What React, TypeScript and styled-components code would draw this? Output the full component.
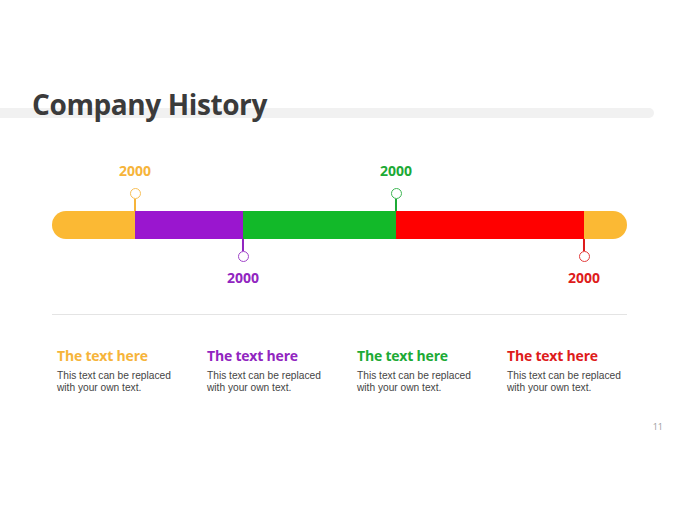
import React from 'react'
import styled, { createGlobalStyle } from 'styled-components'

const GlobalStyle = createGlobalStyle`
  html, body {
    margin: 0;
    padding: 0;
    background: #ffffff;
  }
  body {
    font-family: 'Open Sans', 'Noto Sans', sans-serif;
  }
`

type Milestone = {
  width: number
  color: string
  text: string
  label?: string
  side?: 'up' | 'down'
  rounded?: 'left' | 'right'
}

const segments: Milestone[] = [
  { width: 83, color: '#fbb934', text: '#f6b43a', label: '2000', side: 'up', rounded: 'left' },
  { width: 108, color: '#9a16cf', text: '#9125c0', label: '2000', side: 'down' },
  { width: 153, color: '#12b929', text: '#1caa35', label: '2000', side: 'up' },
  { width: 188, color: '#ff0000', text: '#de1b1b', label: '2000', side: 'down' },
  { width: 43, color: '#fbb934', text: '#f6b43a', rounded: 'right' },
]

const columns = [
  { color: '#f6b43a', title: 'The text here' },
  { color: '#9125c0', title: 'The text here' },
  { color: '#1caa35', title: 'The text here' },
  { color: '#de1b1b', title: 'The text here' },
]

const Slide = styled.div`
  width: 680px;
  height: 510px;
  overflow: hidden;
  display: flex;
  flex-direction: column;
`

const Header = styled.header`
  display: grid;
  height: 40px;
  margin-top: 84px;
`

const Band = styled.div`
  grid-area: 1 / 1;
  align-self: end;
  width: 654px;
  height: 10px;
  margin-bottom: 6px;
  background: #f1f1f1;
  border-radius: 0 5px 5px 0;
`

const Title = styled.h1`
  grid-area: 1 / 1;
  position: relative;
  margin: 0 0 0 32px;
  font-size: 28px;
  line-height: 40px;
  font-weight: 700;
  letter-spacing: -0.4px;
  color: #3b3b3b;
`

const Content = styled.main`
  margin-left: 52px;
  width: 575px;
  display: flex;
  flex-direction: column;
`

const Bar = styled.div`
  display: flex;
  height: 28px;
  margin-top: 87px;
`

const Segment = styled.div<{ $w: number; $c: string; $round?: 'left' | 'right' }>`
  position: relative;
  width: ${(p) => p.$w}px;
  flex: none;
  background: ${(p) => p.$c};
  border-radius: ${(p) =>
    p.$round === 'left' ? '14px 0 0 14px' : p.$round === 'right' ? '0 14px 14px 0' : '0'};
`

const Marker = styled.div<{ $side: 'up' | 'down' }>`
  position: absolute;
  left: 100%;
  transform: translateX(-50%);
  display: flex;
  flex-direction: ${(p) => (p.$side === 'up' ? 'column' : 'column-reverse')};
  align-items: center;
  ${(p) => (p.$side === 'up' ? 'bottom: 100%;' : 'top: 100%;')}
`

const Year = styled.span<{ $c: string }>`
  font-size: 14px;
  line-height: 16px;
  font-weight: 700;
  color: ${(p) => p.$c};
  margin: 0 0 9px;
`

const YearDown = styled(Year)`
  margin: 8px 0 0;
`

const Dot = styled.span<{ $c: string }>`
  box-sizing: border-box;
  width: 11px;
  height: 11px;
  border-radius: 50%;
  border: 1px solid ${(p) => p.$c};
  background: #ffffff;
  opacity: 0.85;
`

const Stem = styled.span<{ $c: string }>`
  width: 2px;
  height: 12px;
  background: ${(p) => p.$c};
`

const Divider = styled.hr`
  margin: 75px 0 0;
  border: 0;
  height: 1px;
  background: #e4e4e4;
`

const Columns = styled.section`
  display: grid;
  grid-template-columns: repeat(4, 150px);
  padding-left: 5px;
  margin-top: 32px;
`

const Column = styled.div`
  display: flex;
  flex-direction: column;
`

const Heading = styled.h2<{ $c: string }>`
  margin: 0;
  font-size: 14px;
  line-height: 18px;
  font-weight: 700;
  letter-spacing: -0.2px;
  color: ${(p) => p.$c};
`

const Body = styled.p`
  margin: 5px 0 0;
  font-family: 'Liberation Sans', Arial, sans-serif;
  font-size: 10.2px;
  line-height: 12px;
  color: #444444;
`

const Footer = styled.footer`
  display: flex;
  justify-content: flex-end;
  padding-right: 17px;
  margin-top: 27px;
  font-size: 9px;
  line-height: 12px;
  color: #9c9c9c;
`

const App: React.FC = () => {
  return (
    <Slide>
      <GlobalStyle />
      <Header>
        <Band />
        <Title>Company History</Title>
      </Header>
      <Content>
        <Bar>
          {segments.map((s, i) => (
            <Segment key={i} $w={s.width} $c={s.color} $round={s.rounded}>
              {s.label && s.side && (
                <Marker $side={s.side}>
                  {s.side === 'up' ? (
                    <Year $c={s.text}>{s.label}</Year>
                  ) : (
                    <YearDown $c={s.text}>{s.label}</YearDown>
                  )}
                  <Dot $c={s.text} />
                  <Stem $c={s.text} />
                </Marker>
              )}
            </Segment>
          ))}
        </Bar>
        <Divider />
        <Columns>
          {columns.map((c, i) => (
            <Column key={i}>
              <Heading $c={c.color}>{c.title}</Heading>
              <Body>
                This text can be replaced
                <br />
                with your own text.
              </Body>
            </Column>
          ))}
        </Columns>
      </Content>
      <Footer>11</Footer>
    </Slide>
  )
}

export default App
